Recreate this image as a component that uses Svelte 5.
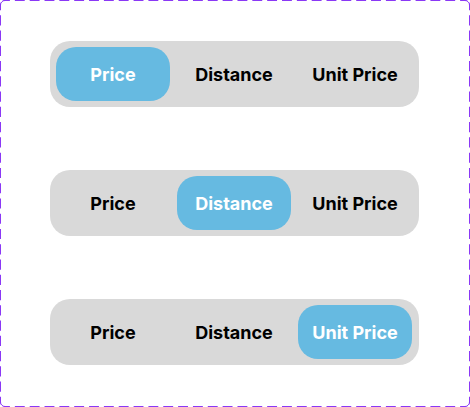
<script>
  const options = ['Price', 'Distance', 'Unit Price'];
  let groups = $state([
    { id: 'sort-a', selected: 'Price' },
    { id: 'sort-b', selected: 'Distance' },
    { id: 'sort-c', selected: 'Unit Price' }
  ]);

  const corners = [
    { x: '0', y: '0', d: 'M.5 5A4.5 4.5 0 0 1 5 .5' },
    { x: '100%', y: '0', d: 'M-5 .5A4.5 4.5 0 0 1-.5 5' },
    { x: '100%', y: '100%', d: 'M-.5-5A4.5 4.5 0 0 1-5-.5' },
    { x: '0', y: '100%', d: 'M5-.5A4.5 4.5 0 0 1 .5-5' }
  ];
</script>

<main>
  <svg class="outline" aria-hidden="true">
    <!-- Each side starts and ends on a full dash, so the corners stay solid. -->
    <g class="sides">
      <line x1="0" y1="0" x2="100%" y2="0" pathLength="475" />
      <line x1="0" y1="100%" x2="100%" y2="100%" pathLength="475" />
      <line x1="0" y1="0" x2="0" y2="100%" pathLength="400" />
      <line x1="100%" y1="0" x2="100%" y2="100%" pathLength="400" />
    </g>
    {#each corners as corner}
      <svg x={corner.x} y={corner.y} width="1" height="1" overflow="visible">
        <path d={corner.d} />
      </svg>
    {/each}
  </svg>
  {#each groups as group (group.id)}
    <div class="segmented" role="group" aria-label="Sort by">
      {#each options as option}
        <button
          type="button"
          class:active={group.selected === option}
          aria-pressed={group.selected === option}
          onclick={() => (group.selected = option)}
        >{option}</button>
      {/each}
    </div>
  {/each}
</main>

<style>
  :global(body) {
    background: #fff;
  }

  main {
    position: relative;
    box-sizing: border-box;
    min-height: 100vh;
    padding: 41px 51px 41px 50px;
    display: flex;
    flex-direction: column;
    gap: 63px;
    font-family: Inter, sans-serif;
  }

  .outline {
    position: absolute;
    inset: 0;
    width: 100%;
    height: 100%;
    border-radius: 5px;
    overflow: hidden;
    pointer-events: none;
    fill: none;
    stroke: #8a38f5;
    stroke-width: 1px;
  }

  .sides {
    stroke-width: 2px;
    stroke-dasharray: 10 5;
  }

  .segmented {
    box-sizing: border-box;
    display: flex;
    justify-content: space-between;
    padding: 6px 7px 6px 6px;
    border-radius: 20px;
    background: #d9d9d9;
  }

  button {
    box-sizing: border-box;
    width: 114px;
    height: 54px;
    padding: 2px 0 0;
    border: 0;
    border-radius: 20px;
    background: transparent;
    color: #000;
    font: 700 18px/22px Inter, sans-serif;
    white-space: nowrap;
    cursor: pointer;
  }

  button.active {
    background: #66bae1;
    color: #fff;
  }
</style>
